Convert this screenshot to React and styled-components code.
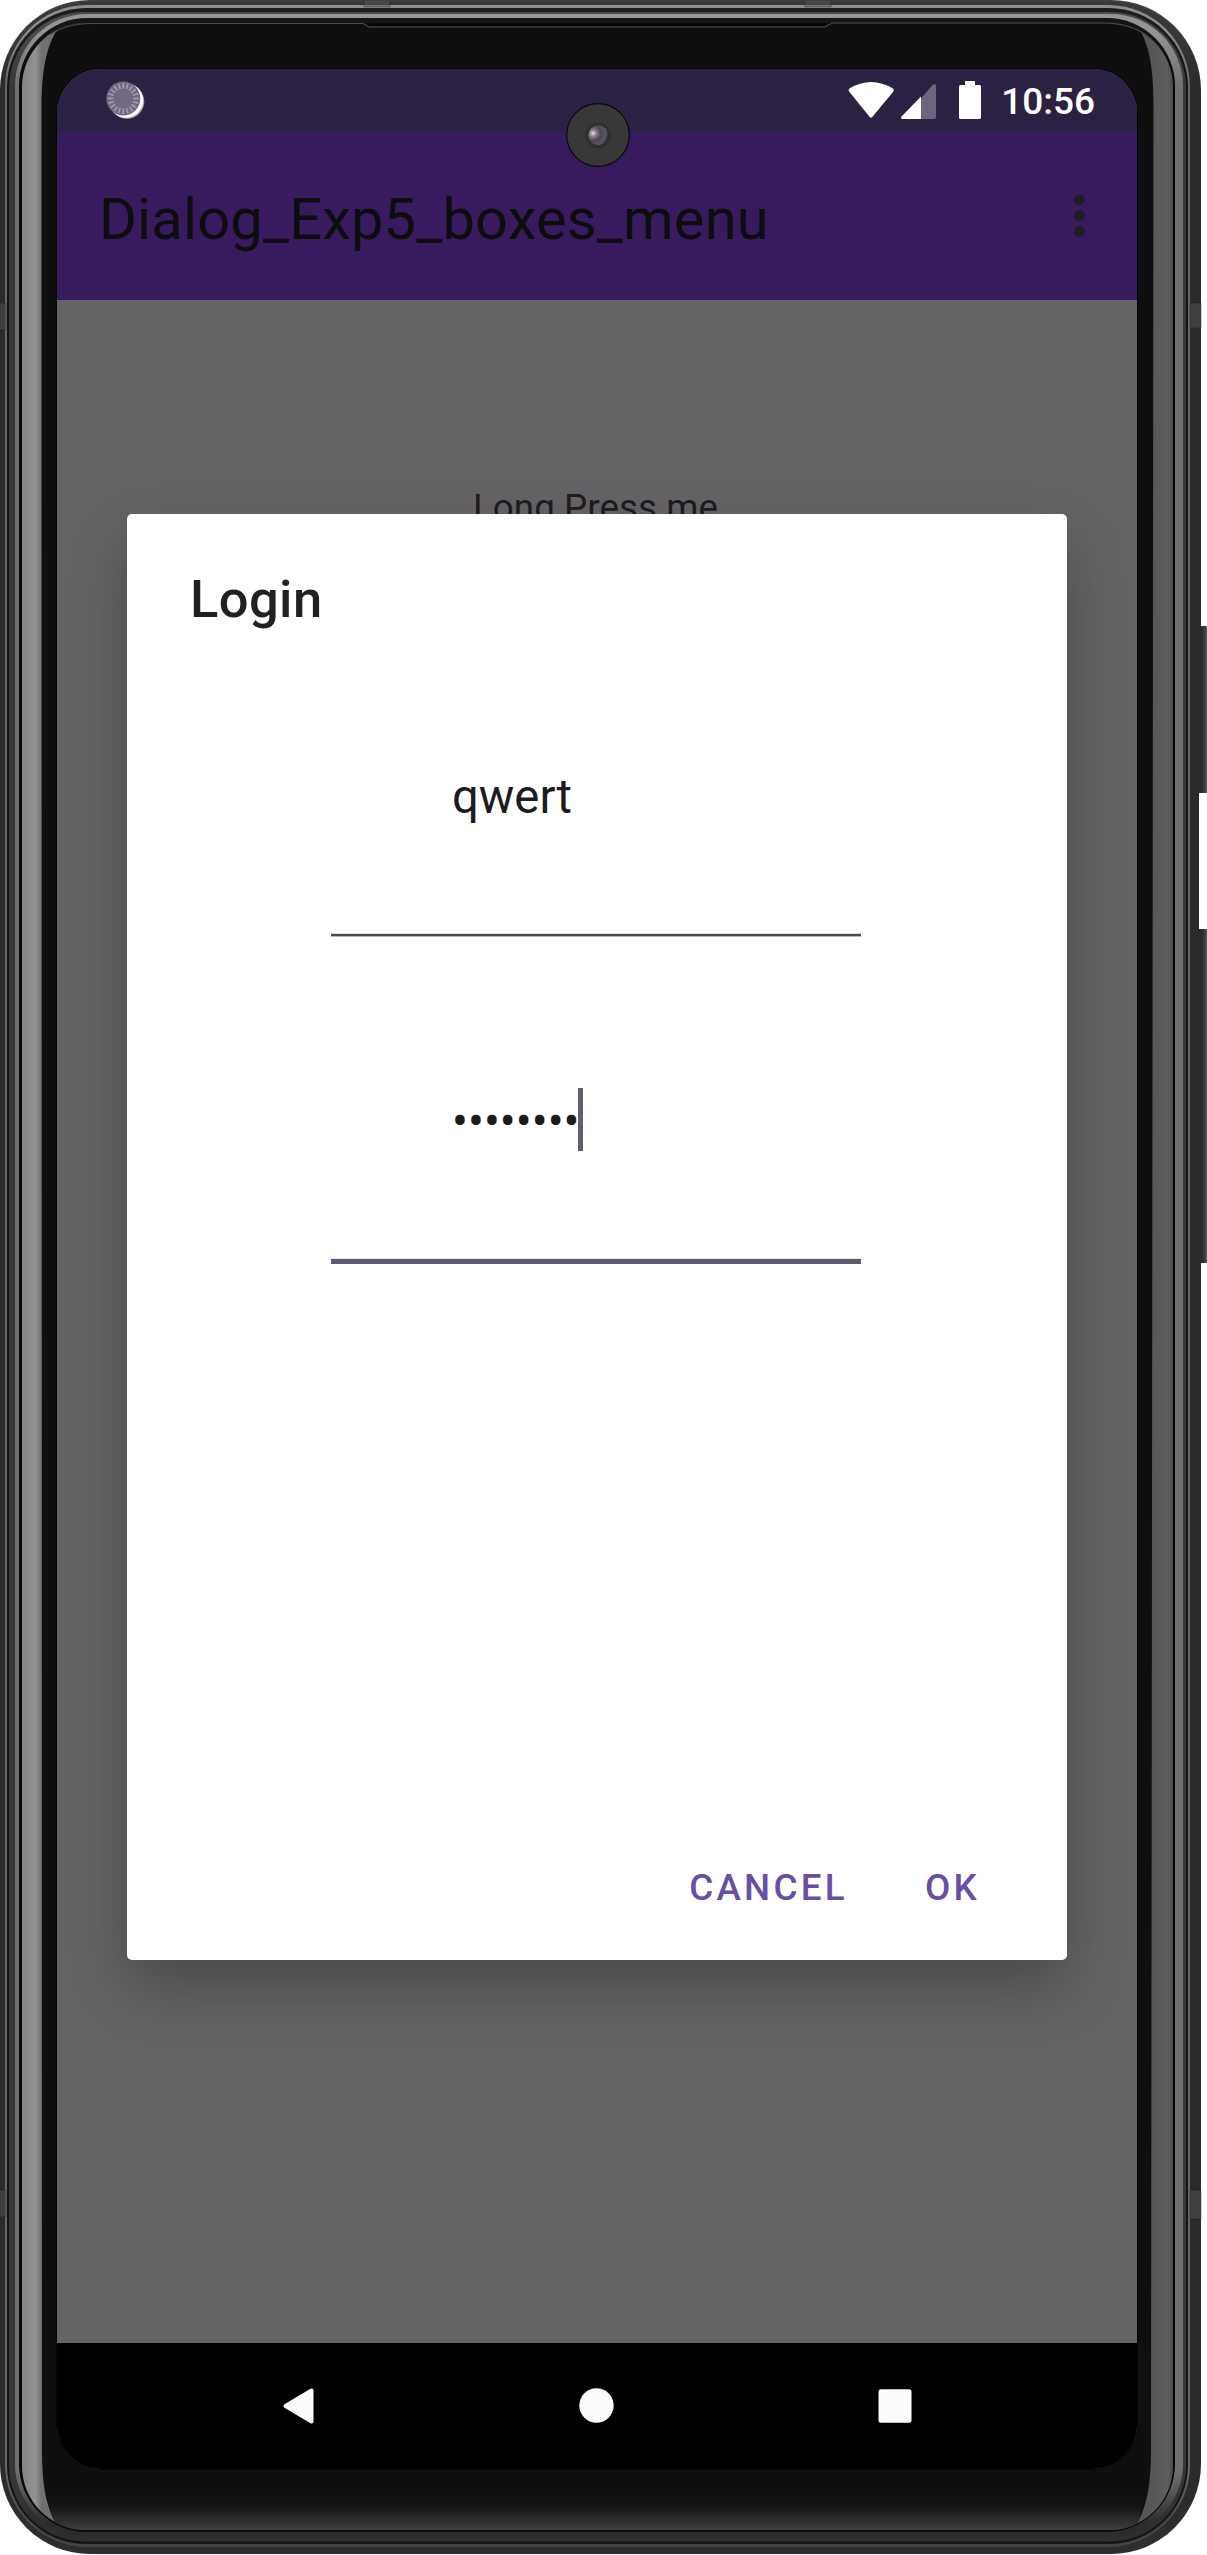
import React from "react";
import styled, { createGlobalStyle } from "styled-components";

const GlobalStyle = createGlobalStyle`
  body {
    margin: 0;
    background: #ffffff;
  }
`;

const Device = styled.main`
  position: relative;
  box-sizing: border-box;
  width: 1207px;
  height: 2555px;
  padding: 69px 70px 86px 57px;
  overflow: hidden;
  font-family: Roboto, "Liberation Sans", sans-serif;
`;

const Casing = styled.svg`
  position: absolute;
  inset: 0;
`;

const Screen = styled.section`
  position: relative;
  display: flex;
  flex-direction: column;
  width: 1080px;
  height: 2400px;
  border-radius: 44px;
  overflow: hidden;
  background: #666366;
`;

const StatusBar = styled.header`
  display: flex;
  align-items: flex-start;
  justify-content: space-between;
  box-sizing: border-box;
  height: 63px;
  padding: 10px 42px 0 48px;
  background: #2b2142;
`;

const StatusIcons = styled.div`
  display: flex;
  align-items: flex-start;
  justify-content: space-between;
  width: 247px;
`;

const Clock = styled.span`
  margin-top: 1px;
  font-size: 37px;
  font-weight: 500;
  line-height: 44px;
  color: #ffffff;
`;

const AppBar = styled.div`
  display: flex;
  align-items: center;
  justify-content: space-between;
  box-sizing: border-box;
  height: 168px;
  padding: 0 47px 0 42px;
  background: #371b5e;
`;

const AppTitle = styled.h1`
  margin: 6px 0 0;
  font-size: 57.75px;
  font-weight: 400;
  line-height: 68px;
  letter-spacing: 0.19px;
  color: #0d0d0e;
`;

const Content = styled.div`
  flex: 1;
  display: flex;
  justify-content: center;
  align-items: flex-start;
  padding: 186px 3px 0 0;
`;

const Hint = styled.p`
  margin: 0;
  font-size: 36.75px;
  line-height: 43px;
  letter-spacing: 0.05px;
  color: #1d1c1f;
`;

const NavBar = styled.nav`
  display: flex;
  align-items: center;
  justify-content: space-between;
  box-sizing: border-box;
  height: 126px;
  padding: 0 225px;
  background: #000000;
`;

const Modal = styled.div`
  position: absolute;
  inset: 445px 70px auto;
`;

const Dialog = styled.div`
  display: flex;
  flex-direction: column;
  box-sizing: border-box;
  height: 1446px;
  padding: 54px 87px 28px 63px;
  border-radius: 5px;
  background: #ffffff;
  box-shadow: 0 28px 60px rgba(0, 0, 0, 0.25);
`;

const DialogTitle = styled.h2`
  margin: 0 0 135px;
  font-size: 52.5px;
  font-weight: 500;
  line-height: 62px;
  letter-spacing: 0.4px;
  color: #212121;
`;

const Field = styled.div`
  display: flex;
  flex-direction: column;
  width: 530px;
  height: ${(p) => p.$height}px;
  margin: 0 0 ${(p) => p.$gap}px 141px;
`;

const FieldValue = styled.div`
  display: flex;
  align-items: center;
  flex: none;
  height: 63px;
  padding-left: 121px;
  font-size: 47.25px;
  line-height: 56px;
  color: #1c1b1f;
`;

const Mask = styled.span`
  padding-top: 5px;
`;

const Caret = styled.span`
  width: 5px;
  height: 63px;
  margin-left: -2px;
  background: #625b71;
`;

const Underline = styled.div`
  margin-top: auto;
  height: ${(p) => (p.$focused ? 6 : 4)}px;
  background: ${(p) =>
    p.$focused
      ? "linear-gradient(#e3e2e6 1px, #625b71 1px)"
      : "linear-gradient(#dfdfe1 1px, #49484f 1px 3px, #b5b5b9 3px)"};
`;

const Actions = styled.div`
  display: flex;
  justify-content: flex-end;
  gap: 77px;
  margin-top: auto;
`;

const ActionButton = styled.button`
  padding: 0;
  border: 0;
  background: none;
  font: 500 36.75px/88px Roboto, "Liberation Sans", sans-serif;
  letter-spacing: 3.28px;
  color: #6750a4;
`;

const Camera = styled.svg`
  position: absolute;
  left: 509px;
  top: 34px;
`;

/* Concentric shells of the metal rim: edges, corner radius and gradient. */
const SHELLS = [
  [0, 0, 1201, 2554, 90, ["#414141", "#2a2a2a", "#2f2f2f"]],
  [1.5, 1.5, 1199.5, 2552.5, 88, ["#383838", "#2b2b2b", "#2d2d2d"]],
  [5, 5, 1190, 2547, 82, ["#8e8e8e", "#686868", "#444444"]],
  [7, 8, 1188, 2544, 79, ["#1d1d1d", "#141414", "#151515"]],
  [9, 12, 1186, 2541.5, 76, ["#4a4a4a", "#383838", "#2e2e2e"]],
  [15, 14, 1183, 2536, 72, ["#959595", "#6f6f6f", "#2c2c2c"]],
  [19, 18, 1175, 2532, 68, ["#151515", "#060606", "#0c0c0c"]],
];

const SEAMS = [
  [0, 303, 6, 27],
  [0, 2190, 6, 27],
  [1190, 303, 11, 25],
  [1190, 2190, 11, 29],
  [364, 0, 26, 7],
  [805, 0, 26, 7],
];

function PhoneCasing() {
  return (
    <Casing width="1207" height="2555" viewBox="0 0 1207 2555" aria-hidden="true">
      <defs>
        {SHELLS.map((s, i) => (
          <linearGradient key={i} id={`shell${i}`} gradientUnits="userSpaceOnUse" x1="0" y1="0" x2="0" y2="2554">
            <stop offset="0.012" stopColor={s[5][0]} />
            <stop offset="0.034" stopColor={s[5][1]} />
            <stop offset="0.968" stopColor={s[5][1]} />
            <stop offset="0.988" stopColor={s[5][2]} />
          </linearGradient>
        ))}
        <linearGradient id="gloss">
          <stop offset="0" stopColor="#858585" />
          <stop offset="0.012" stopColor="#929292" />
          <stop offset="0.017" stopColor="#707070" />
          <stop offset="0.98" stopColor="#565656" />
          <stop offset="0.995" stopColor="#5e5e5e" />
          <stop offset="1" stopColor="#4c4c4c" />
        </linearGradient>
        <linearGradient id="chin" x1="0" y1="0" x2="0" y2="1">
          <stop offset="0" stopColor="#0f0f0f" />
          <stop offset="0.4" stopColor="#141414" />
          <stop offset="1" stopColor="#434343" />
        </linearGradient>
        <linearGradient id="key">
          <stop offset="0" stopColor="#191919" />
          <stop offset="0.7" stopColor="#333333" />
          <stop offset="1" stopColor="#5a5a5a" />
        </linearGradient>
        <clipPath id="glass">
          <rect x="22" y="23" width="1151" height="2507" rx="64" />
        </clipPath>
      </defs>
      <rect x="1196" y="626" width="11" height="167" fill="url(#key)" />
      <rect x="1196" y="929" width="11" height="334" fill="url(#key)" />
      {SHELLS.map((s, i) => (
        <rect key={i} x={s[0]} y={s[1]} width={s[2] - s[0]} height={s[3] - s[1]} rx={s[4]} fill={`url(#shell${i})`} />
      ))}
      <rect x="1199" y="793" width="3" height="136" fill="#ffffff" />
      {SEAMS.map(([x, y, w, h]) => (
        <rect key={`${x}-${y}`} x={x} y={y} width={w} height={h} fill="#555555" fillOpacity="0.5" stroke="#1c1c1c" strokeOpacity="0.5" strokeWidth="0.7" />
      ))}
      <g clipPath="url(#glass)">
        <rect x="22" y="23" width="1151" height="2507" fill="url(#gloss)" />
        <path
          d="M41.5 105C42 67 47 46 57 30L60 20H1137L1140 30C1149 46 1153.500 67 1153.500 105L1151 2450C1151 2484 1147 2505 1138 2522L1136 2532H57L55 2522C46 2505 42 2484 42 2450Z"
          fill="#0f0f0f"
        />
        <path d="M48 2490H1145C1143 2506 1141 2515 1137 2524V2532H56V2524C51 2515 49 2506 48 2490Z" fill="url(#chin)" />
      </g>
      <path d="M50 35C62 27 74 23.500 92 23.500H363L369 27H825L832 23H1104C1122 23.500 1134 27 1146 35" fill="none" stroke="#505050" />
      <path d="M369 24.500H825" stroke="#060606" strokeWidth="3" />
      <rect x="56" y="68" width="1082" height="2402" rx="45" fill="#050507" />
    </Casing>
  );
}

function SyncIcon() {
  return (
    <svg width="42" height="42" viewBox="0 0 42 42" aria-hidden="true">
      <circle cx="22" cy="22.500" r="17.300" fill="#a39eae" />
      <circle cx="21" cy="21.500" r="17.200" fill="#ffffff" />
      <circle cx="18.300" cy="19.500" r="17" fill="#716a82" />
      {Array.from({ length: 20 }, (_, i) => (
        <path key={i} d="M18.300 4V9.500" stroke="#a7a2b2" strokeWidth="1.500" transform={`rotate(${i * 18} 18.300 19.500)`} />
      ))}
    </svg>
  );
}

function SignalIcons() {
  return (
    <svg width="136" height="42" viewBox="848 79 136 42" aria-hidden="true">
      <path d="M849.300 88.500Q848 90 849.500 92L869.500 116.800Q871 118.500 872.500 116.800L893 92Q894.300 90 893 88.500Q871.200 75.500 849.300 88.500Z" fill="#ffffff" />
      <path d="M921 98.500L932.500 85Q936 82.500 936 86V117Q936 119 934 119H921Z" fill="#6d657c" />
      <path d="M921 96.500V119H903Q900 119 901.500 116.500Z" fill="#ffffff" />
      <path d="M965 81H975V85H979.500Q981 85 981 86.500V117.500Q981 119 979.500 119H960.500Q959 119 959 117.500V86.500Q959 85 960.500 85H965Z" fill="#ffffff" />
    </svg>
  );
}

function OverflowIcon() {
  return (
    <svg width="22" height="46" viewBox="0 0 22 46" aria-hidden="true">
      {[6.8, 22.6, 38.4].map((cy) => (
        <circle key={cy} cx="11.500" cy={cy} r="5.400" fill="#1e1d20" />
      ))}
    </svg>
  );
}

function CameraLens() {
  return (
    <Camera width="64" height="64" viewBox="0 0 64 64" aria-hidden="true">
      <defs>
        <radialGradient id="lens" cx="0.24" cy="0.4" r="0.75">
          <stop offset="0" stopColor="#e6dfe4" />
          <stop offset="0.22" stopColor="#8c8087" />
          <stop offset="0.5" stopColor="#4e454c" />
          <stop offset="0.85" stopColor="#525968" />
          <stop offset="1" stopColor="#333333" />
        </radialGradient>
      </defs>
      <circle cx="32" cy="32" r="31.300" fill="#383838" stroke="#08080a" strokeWidth="1.200" />
      <circle cx="32" cy="32.500" r="12.500" fill="#2f2e2f" />
      <circle cx="32.300" cy="32.300" r="10" fill="url(#lens)" />
    </Camera>
  );
}

function BackIcon() {
  return (
    <svg width="34" height="38" viewBox="0 0 34 38" aria-hidden="true">
      <path d="M3.500 19L29.500 3.500V34.500Z" fill="#fcfcfc" stroke="#fcfcfc" strokeWidth="4" strokeLinejoin="round" />
    </svg>
  );
}

function HomeIcon() {
  return (
    <svg width="36" height="36" viewBox="0 0 36 36" aria-hidden="true">
      <circle cx="17.500" cy="17.500" r="17.200" fill="#fcfcfc" />
    </svg>
  );
}

function RecentsIcon() {
  return (
    <svg width="34" height="34" viewBox="0 0 34 34" aria-hidden="true">
      <rect x="0.500" y="0.300" width="33" height="33.400" rx="2.500" fill="#fcfcfc" />
    </svg>
  );
}

export default function App() {
  return (
    <Device>
      <GlobalStyle />
      <PhoneCasing />
      <Screen>
        <StatusBar>
          <SyncIcon />
          <StatusIcons>
            <SignalIcons />
            <Clock>10:56</Clock>
          </StatusIcons>
        </StatusBar>
        <AppBar>
          <AppTitle>Dialog_Exp5_boxes_menu</AppTitle>
          <OverflowIcon />
        </AppBar>
        <Content>
          <Hint>Long Press me</Hint>
        </Content>
        <NavBar>
          <BackIcon />
          <HomeIcon />
          <RecentsIcon />
        </NavBar>
        <Modal>
          <Dialog role="dialog" aria-label="Login">
            <DialogTitle>Login</DialogTitle>
            <Field $height={172} $gap={151}>
              <FieldValue>qwert</FieldValue>
              <Underline />
            </Field>
            <Field $height={176} $gap={0}>
              <FieldValue>
                <Mask>••••••••</Mask>
                <Caret />
              </FieldValue>
              <Underline $focused />
            </Field>
            <Actions>
              <ActionButton type="button">CANCEL</ActionButton>
              <ActionButton type="button">OK</ActionButton>
            </Actions>
          </Dialog>
        </Modal>
        <CameraLens />
      </Screen>
    </Device>
  );
}
